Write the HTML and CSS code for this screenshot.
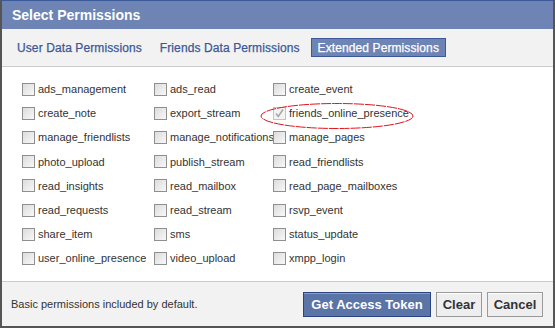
FILE: index.html
```html
<!DOCTYPE html>
<html lang="en">
<head>
    <meta charset="UTF-8">
    <title>Select Permissions</title>
    <link rel="stylesheet" href="styles.css">
</head>
<body>
    <div class="dialog">
        <div class="titlebar">Select Permissions</div>
        <div class="tabs">
            <span class="tab">User Data Permissions</span>
            <span class="tab">Friends Data Permissions</span>
            <span class="tab selected">Extended Permissions</span>
        </div>
        <div class="perms">
            <label class="perm"><span class="box"></span>ads_management</label>
            <label class="perm"><span class="box"></span>ads_read</label>
            <label class="perm"><span class="box"></span>create_event</label>

            <label class="perm"><span class="box"></span>create_note</label>
            <label class="perm"><span class="box"></span>export_stream</label>
            <label class="perm"><span class="box checked"><svg width="11" height="11" viewBox="0 0 11 11"><path d="M2 5.5 L4.3 8.5 L9 1.5" fill="none" stroke="#a8a8a8" stroke-width="1.6"/></svg></span>friends_online_presence</label>

            <label class="perm"><span class="box"></span>manage_friendlists</label>
            <label class="perm"><span class="box"></span>manage_notifications</label>
            <label class="perm"><span class="box"></span>manage_pages</label>

            <label class="perm"><span class="box"></span>photo_upload</label>
            <label class="perm"><span class="box"></span>publish_stream</label>
            <label class="perm"><span class="box"></span>read_friendlists</label>

            <label class="perm"><span class="box"></span>read_insights</label>
            <label class="perm"><span class="box"></span>read_mailbox</label>
            <label class="perm"><span class="box"></span>read_page_mailboxes</label>

            <label class="perm"><span class="box"></span>read_requests</label>
            <label class="perm"><span class="box"></span>read_stream</label>
            <label class="perm"><span class="box"></span>rsvp_event</label>

            <label class="perm"><span class="box"></span>share_item</label>
            <label class="perm"><span class="box"></span>sms</label>
            <label class="perm"><span class="box"></span>status_update</label>

            <label class="perm"><span class="box"></span>user_online_presence</label>
            <label class="perm"><span class="box"></span>video_upload</label>
            <label class="perm"><span class="box"></span>xmpp_login</label>
        </div>
        <div class="footer">
            <span class="note">Basic permissions included by default.</span>
            <div class="buttons">
                <button class="btn primary">Get Access Token</button>
                <button class="btn clear">Clear</button>
                <button class="btn cancel">Cancel</button>
            </div>
        </div>
        <!-- red annotation around the checked item -->
        <svg class="mark" width="156" height="28" viewBox="0 0 156 28">
            <ellipse cx="78" cy="14" rx="76" ry="12.5" fill="none" stroke="#e0141e" stroke-width="1" stroke-dasharray="10 1"/>
        </svg>
    </div>
</body>
</html>
```

FILE: styles.css
```css
body {
    margin: 0;
    font-family: "Liberation Sans", Arial, sans-serif;
    background: #ffffff;
}
.dialog {
    position: relative;
    width: 555px;
    height: 328px;
    box-sizing: border-box;
    border: 2px solid #555555;
    border-top: 1px solid #3b5998;
    display: flex;
    flex-direction: column;
    background: #ffffff;
}
.titlebar {
    height: 28px;
    background: #6d84b4;
    color: #ffffff;
    font-size: 14px;
    font-weight: bold;
    line-height: 28px;
    padding-left: 10px;
}
.tabs {
    height: 37px;
    background: #f2f2f2;
    border-bottom: 1px solid #cccccc;
    display: flex;
    align-items: center;
    padding-left: 8px;
    gap: 4px;
}
.tab {
    font-size: 12px;
    letter-spacing: 0.1px;
    color: #3b5998;
    padding: 2px 6px 1px;
    border: 1px solid transparent;
    line-height: 14px;
    -webkit-text-stroke: 0.25px #3b5998;
}
.tab.selected {
    background: #6d84b4;
    border-color: #3b5998;
    color: #ffffff;
    -webkit-text-stroke: 0.25px #ffffff;
}
.perms {
    flex: 1;
    display: grid;
    grid-template-columns: 132px 119px 1fr;
    grid-auto-rows: 24.2px;
    padding: 10px 0 0 20px;
}
.perm {
    display: flex;
    align-items: center;
    gap: 3px;
    font-size: 11px;
    color: #333333;
    white-space: nowrap;
}
.box {
    width: 11px;
    height: 11px;
    flex: none;
    border: 1px solid #8f8f8f;
    background: linear-gradient(135deg, #dcdcdc, #f8f8f8);
    display: flex;
    align-items: center;
    justify-content: center;
}
.box.checked {
    border-color: #c4c4c4;
    background: #f4f4f4;
}
.footer {
    height: 44px;
    background: #f2f2f2;
    border-top: 1px solid #cccccc;
    display: flex;
    align-items: center;
    justify-content: space-between;
    padding: 0 10px 0 9px;
}
.note {
    font-size: 11px;
    color: #333333;
}
.buttons {
    display: flex;
    gap: 5px;
}
.btn {
    font-family: "Liberation Sans", Arial, sans-serif;
    font-size: 13px;
    font-weight: bold;
    height: 25px;
    padding: 0;
    color: #333333;
    background: #eeeeee;
    border: 1px solid #999999;
    box-shadow: inset 0 1px 0 #ffffff;
}
.btn.primary {
    width: 128px;
    color: #ffffff;
    background: #5b74a8;
    border-color: #29447e;
    box-shadow: inset 0 1px 0 #8a9cc2;
}
.btn.clear {
    width: 46px;
}
.btn.cancel {
    width: 56px;
}
.mark {
    position: absolute;
    left: 257px;
    top: 101px;
}
```
